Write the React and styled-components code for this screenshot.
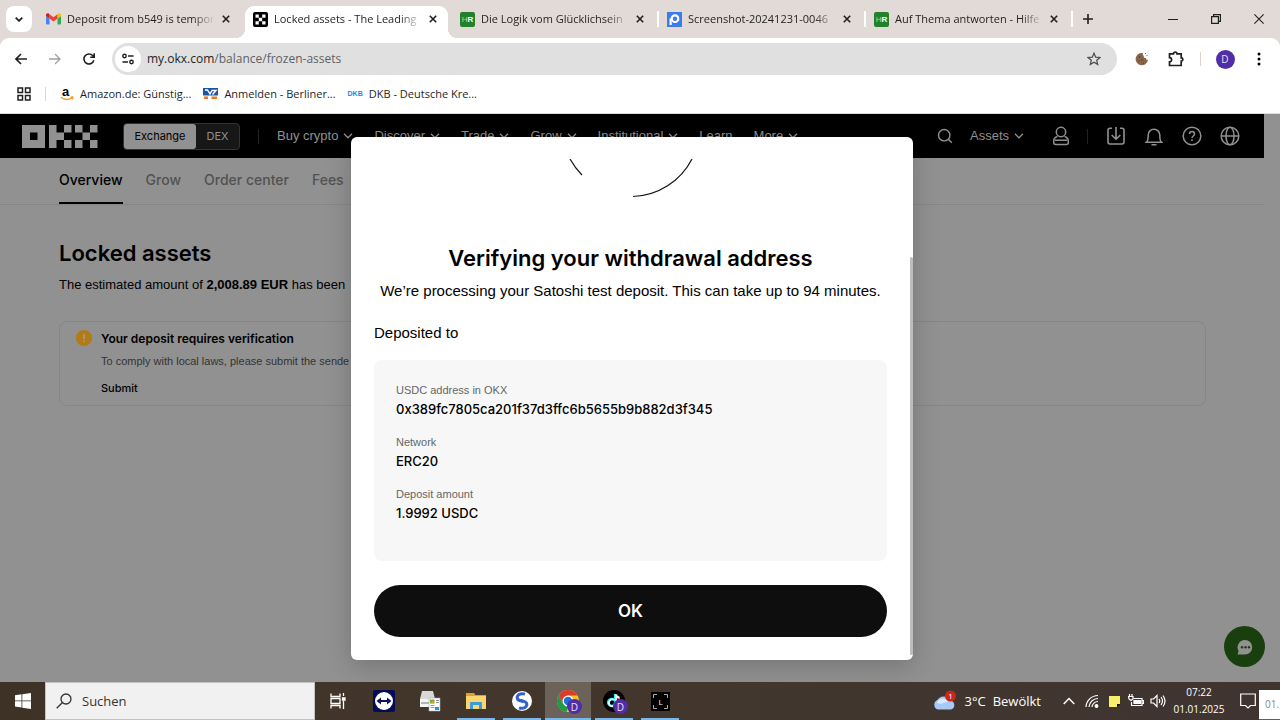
import React from "react";
import styled, { createGlobalStyle } from "styled-components";

const Global = createGlobalStyle`
  *, *::before, *::after { box-sizing: border-box; }
  html, body { margin: 0; height: 100%; overflow: hidden; }
  #root { height: 100%; }
  button, input { font: inherit; color: inherit; border: 0; margin: 0; padding: 0; background: none; }
  a { color: inherit; text-decoration: none; }
  h1, h2, h3, p, dl, dd, dt { margin: 0; font-weight: 400; }
  svg { display: block; flex: none; }
`;

const ui = `"Open Sans", "Noto Sans", sans-serif`;
const site = `"Liberation Sans", Arial, sans-serif`;
const strong = `Inter, "Liberation Sans", sans-serif`;

const Desktop = styled.div`
  height: 100vh;
  display: flex;
  flex-direction: column;
  font-family: ${ui};
  font-size: 11px;
  color: #1f1f1f;
`;

/* ---------- browser window ---------- */
const TabStrip = styled.div`
  height: 38px;
  flex: none;
  display: flex;
  align-items: center;
  padding-left: 6px;
  background: #e2dad7;
`;
const TabSearch = styled.button`
  width: 26px;
  height: 26px;
  flex: none;
  margin-right: 6px;
  border-radius: 8px;
  background: #fff;
  display: grid;
  place-items: center;
`;
const Tab = styled.div`
  position: relative;
  flex: 0 1 207px;
  min-width: 0;
  height: 32px;
  align-self: flex-end;
  display: flex;
  align-items: center;
  padding: 0 11px 6px 8px;
  border-radius: 9px 9px 0 0;
  ${(p) => p.$active && `
    &::before, &::after {
      content: "";
      position: absolute;
      bottom: 0;
      width: 9px;
      height: 9px;
    }
    margin-right: 4px;
    flex-basis: 203px;
    padding-right: 7px;
    background: #fff;
    &::before { left: -9px; background: radial-gradient(circle at 0 0, transparent 9px, #fff 9px); }
    &::after { right: -9px; background: radial-gradient(circle at 100% 0, transparent 9px, #fff 9px); }
  `}
`;
const TabTitle = styled.span`
  flex: 1;
  min-width: 0;
  margin: 0 4px 0 6px;
  line-height: 16px;
  white-space: nowrap;
  overflow: hidden;
  mask-image: linear-gradient(90deg, #000 126px, transparent 148px);
`;
const TabClose = styled.button`
  width: 16px;
  height: 16px;
  flex: none;
  display: grid;
  place-items: center;
`;
const TabRule = styled.span`
  position: absolute;
  right: 0;
  top: 5px;
  width: 2px;
  height: 16px;
  background: #fff;
`;
const NewTab = styled.button`
  width: 30px;
  height: 30px;
  flex: none;
  display: grid;
  place-items: center;
`;
const WindowButtons = styled.div`
  margin-left: auto;
  display: flex;
`;
const WindowButton = styled.button`
  width: 43px;
  height: 38px;
  display: grid;
  place-items: center;
`;
const Toolbar = styled.div`
  background: #e2dad7;
  flex: none;
`;
const ToolbarInner = styled.div`
  height: 42px;
  display: flex;
  align-items: center;
  padding: 0 4px;
  border-radius: 9px 9px 0 0;
  background: #fff;
`;
const ToolButton = styled.button`
  width: 34px;
  height: 34px;
  flex: none;
  display: grid;
  place-items: center;
`;
const Omnibox = styled.form`
  flex: 1;
  height: 32px;
  margin: 0 8px 0 6px;
  padding: 0 6px 0 3px;
  border-radius: 16px;
  background: #e0e0e0;
  display: flex;
  align-items: center;
  gap: 6px;
`;
const SiteInfo = styled.button`
  width: 26px;
  height: 26px;
  border-radius: 50%;
  background: #fff;
  display: grid;
  place-items: center;
`;
const Address = styled.div`
  flex: 1;
  font-size: 12px;
  line-height: 18px;
  color: #5f6164;
  b { font-weight: 400; color: #1f1f1f; }
`;
const ToolRule = styled.span`
  width: 1px;
  height: 14px;
  margin: 0 7px;
  background: #e2d3cd;
`;
const Avatar = styled.span`
  width: ${(p) => p.$size}px;
  height: ${(p) => p.$size}px;
  border-radius: 50%;
  display: grid;
  place-items: center;
  background: #512da8;
  color: #e8e0f6;
  font-size: 10px;
  line-height: 1;
`;
const Bookmarks = styled.nav`
  height: 34px;
  flex: none;
  display: flex;
  align-items: center;
  padding: 0 17px 6px;
  background: #fff;
  border-bottom: 1px solid #dcdcdc;
`;
const BookmarkRule = styled.span`
  width: 1px;
  height: 14px;
  margin: 0 14px;
  background: #e2d3cd;
`;
const Bookmark = styled.a`
  display: flex;
  align-items: center;
  gap: 6px;
  margin-right: 12px;
  line-height: 16px;
  white-space: nowrap;
`;
const DkbMark = styled.span`
  font-family: "Liberation Sans", sans-serif;
  font-size: 7px;
  font-weight: 700;
  color: #148dea;
`;
const HrMark = styled.span`
  width: 15px;
  height: 15px;
  flex: none;
  border-radius: 2px;
  background: #23802b;
  color: #a9d6a4;
  font: 8px/15px "Liberation Sans", sans-serif;
  text-align: center;
  b { color: #fff; }
`;

/* ---------- site, dimmed behind the dialog ---------- */
const Page = styled.main`
  position: relative;
  flex: 1;
  min-height: 0;
  padding-right: 16px;
  background: #919191;
  font-family: ${site};
  color: #000;
`;
const SiteHeader = styled.header`
  height: 44px;
  display: flex;
  align-items: center;
  padding: 0 15px 0 22px;
  background: #000;
  color: #919191;
  font-size: 13px;
  line-height: 18px;
`;
const Switcher = styled.div`
  display: flex;
  height: 27px;
  margin-left: 24px;
  border: 1px solid #333;
  border-radius: 4px;
  background: #171717;
  font-family: ${strong};
  font-size: 11px;
`;
const SwitchOption = styled.button`
  width: ${(p) => (p.$on ? 72 : 43)}px;
  border-radius: 3px;
  background: ${(p) => (p.$on ? "#919191" : "transparent")};
  color: ${(p) => (p.$on ? "#000" : "#919191")};
`;
const HeaderRule = styled.span`
  width: 1px;
  height: 15px;
  background: #222;
  margin: 0 ${(p) => p.$gap}px;
`;
const MainMenu = styled.nav`
  display: flex;
  gap: 21px;
`;
const MenuLink = styled.a`
  display: flex;
  align-items: center;
  gap: 5px;
  white-space: nowrap;
`;
const HeaderTools = styled.div`
  margin-left: auto;
  display: flex;
  align-items: center;
  ${MenuLink} { margin: 0 20px 0 6px; }
`;
const HeaderButton = styled.button`
  width: ${(p) => p.$w || 38}px;
  height: 24px;
  display: grid;
  place-items: center;
`;
const SubNav = styled.nav`
  height: 47px;
  display: flex;
  gap: 23px;
  padding: 0 59px;
  border-bottom: 1px solid #868686;
`;
const SubLink = styled.a`
  height: 46px;
  padding-top: 12px;
  font-family: ${strong};
  font-size: 14px;
  line-height: 20px;
  font-weight: 500;
  white-space: nowrap;
  color: ${(p) => (p.$on ? "#000" : "#525252")};
  border-bottom: 2px solid ${(p) => (p.$on ? "#000" : "transparent")};
`;
const Content = styled.section`
  padding: 34px 58px 0 59px;
`;
const PageTitle = styled.h1`
  font-family: ${strong};
  font-size: 22px;
  line-height: 28px;
  font-weight: 600;
`;
const Summary = styled.p`
  margin-top: 8px;
  font-size: 13px;
  line-height: 20px;
`;
const Notice = styled.article`
  margin-top: 26px;
  height: 85px;
  padding: 8px 16px;
  border: 1px solid #868686;
  border-radius: 8px;
  display: flex;
  gap: 9px;
`;
const NoticeText = styled.div`
  display: flex;
  flex-direction: column;
  align-items: flex-start;
  font-size: 11px;
  line-height: 16px;
  h2 { font-family: ${strong}; font-size: 12px; line-height: 18px; font-weight: 600; }
  p { margin-top: 5px; color: #333; }
  button { margin-top: 11px; font-family: ${strong}; font-weight: 500; }
`;
const ChatButton = styled.button`
  position: absolute;
  right: 15px;
  bottom: 15px;
  width: 41px;
  height: 41px;
  border-radius: 50%;
  background: #193f0e;
  display: grid;
  place-items: center;
`;

/* ---------- dialog ---------- */
const DialogLayer = styled.div`
  position: absolute;
  inset: 0 16px 0 0;
  display: grid;
  place-items: center;
`;
const Dialog = styled.section`
  position: relative;
  width: 562px;
  max-width: 90%;
  margin-top: 1px;
  padding: 22px 26px 23px 23px;
  border-radius: 6px;
  background: #fff;
  box-shadow: 0 6px 26px rgba(0, 0, 0, 0.2);
`;
const ScrollThumb = styled.span`
  position: absolute;
  right: 0;
  top: 120px;
  bottom: 5px;
  width: 3px;
  border-radius: 2px;
  background: #bdbdbd;
`;
const Spinner = styled.div`
  height: 40px;
  display: flex;
  justify-content: center;
`;
const DialogTitle = styled.h2`
  margin-top: 44px;
  font-family: ${strong};
  font-size: 22px;
  line-height: 30px;
  font-weight: 600;
  text-align: center;
  white-space: nowrap;
`;
const DialogText = styled.p`
  margin-top: 7px;
  font-size: 15px;
  line-height: 22px;
  text-align: center;
  white-space: nowrap;
`;
const Heading = styled.h3`
  margin-top: 20px;
  font-size: 15px;
  line-height: 22px;
`;
const Details = styled.dl`
  margin-top: 16px;
  padding: 22px 22px 39px;
  border-radius: 8px;
  background: #f7f7f7;
  display: grid;
  gap: 16px;
`;
const Detail = styled.div`
  dt { font-size: 11px; line-height: 16px; color: #666; }
  dd { margin-top: 2px; font-family: ${strong}; font-size: 13px; line-height: 18px; font-weight: 500; }
`;
const OkButton = styled.button`
  display: block;
  width: 100%;
  height: 52px;
  margin-top: 24px;
  border-radius: 26px;
  background: #0e0e0e;
  color: #fff;
  font-family: ${strong};
  font-size: 17px;
  font-weight: 600;
`;

/* ---------- taskbar ---------- */
const Taskbar = styled.footer`
  position: relative;
  height: 38px;
  flex: none;
  display: flex;
  align-items: stretch;
  background: linear-gradient(90deg, #3e3126, #43362c 40%, #41362f 70%, #3f3430);
  color: #fff;
`;
const StartButton = styled.button`
  width: 45px;
  display: grid;
  place-items: center;
`;
const SearchBox = styled.label`
  width: 270px;
  display: flex;
  align-items: center;
  gap: 10px;
  padding-left: 10px;
  background: #f1f1f1;
  border: 1px solid #c4c2c0;
  color: #333;
  font-size: 13px;
  input { width: 100%; outline: 0; }
  input::placeholder { color: #333; opacity: 1; }
`;
const TaskButton = styled.button`
  position: relative;
  width: 46px;
  display: grid;
  place-items: center;
  background: ${(p) => (p.$active ? "#6b625a" : "transparent")};
  &::after {
    content: "";
    position: absolute;
    bottom: 0;
    left: ${(p) => (p.$active ? 0 : 4)}px;
    right: ${(p) => (p.$active ? 0 : 4)}px;
    height: 2px;
    background: ${(p) => (p.$open ? "#79b8ea" : "transparent")};
  }
`;
const AppBadge = styled.span`
  position: absolute;
  right: 9px;
  bottom: 6px;
`;
const Tray = styled.div`
  margin-left: auto;
  display: flex;
  align-items: center;
`;
const Weather = styled.button`
  display: flex;
  align-items: center;
  gap: 7px;
  font-size: 13px;
  margin-right: 16px;
  white-space: nowrap;
`;
const TrayButton = styled.button`
  width: ${(p) => p.$w || 22}px;
  height: 38px;
  display: grid;
  place-items: center;
`;
const Clock = styled.time`
  width: 60px;
  margin-right: 8px;
  text-align: center;
  font-size: 10px;
  line-height: 17px;
`;
const DateTip = styled.span`
  width: 21px;
  height: 30px;
  align-self: flex-end;
  padding: 6px 0 0 6px;
  background: #fff;
  border-bottom: 1px solid #1b6fc0;
  color: #888;
  font-size: 10px;
  line-height: 16px;
`;

/* ---------- drawings ---------- */
const Stroke = ({ w, h = w, box, sw = 1.5, children, color = "currentColor" }) => (
  <svg width={w} height={h} viewBox={box || `0 0 ${w} ${h}`} fill="none" stroke={color} strokeWidth={sw}>
    {children}
  </svg>
);
const Chevron = () => (
  <Stroke w={10} h={6} sw={1.3}><path d="M1 .8 5 4.8 9 .8" /></Stroke>
);
const CloseX = () => (
  <Stroke w={8} sw={1.6} color="#1f1f1f"><path d="M.8.8l6.4 6.4M7.2.8.8 7.2" /></Stroke>
);
const Gmail = () => (
  <svg width="15" height="12" viewBox="0 0 15 12">
    <path fill="#4285f4" d="M1 11.5h2.5V5.6L0 3v7.5a1 1 0 0 0 1 1z" />
    <path fill="#34a853" d="M11.5 11.5H14a1 1 0 0 0 1-1V3l-3.5 2.6z" />
    <path fill="#fbbc04" d="M11.5 1.2v4.4L15 3V1.9C15 .4 13.3-.4 12.2.6z" />
    <path fill="#ea4335" d="M3.5 5.6V1.2l4 3 4-3v4.400l-4 3z" />
    <path fill="#c5221f" d="M0 1.9V3l3.5 2.6V1.2L2.8.6C1.7-.4 0 .4 0 1.9z" />
  </svg>
);
const OkxIcon = () => (
  <svg width="15" height="15" viewBox="0 0 15 15">
    <rect width="15" height="15" rx="2" />
    <path fill="#fff" d="M2.5 2.5h3.300v3.300H2.500zM9.200 2.500h3.300v3.300H9.200zM5.800 5.800h3.400v3.400H5.800zM2.500 9.200h3.300v3.300H2.500zM9.200 9.200h3.300v3.300H9.200z" />
  </svg>
);
const PictrIcon = () => (
  <svg width="15" height="15" viewBox="0 0 15 15">
    <rect width="15" height="15" fill="#3b7bea" />
    <circle cx="8" cy="6.7" r="3.3" fill="none" stroke="#fff" strokeWidth="2.2" />
    <path d="M3.6 6.5V13" stroke="#fff" strokeWidth="2.2" />
  </svg>
);
const OkxLogo = () => (
  <svg width="77" height="23" viewBox="0 0 77 23" fill="#919191">
    <path fillRule="evenodd" d="M0 0h23v23H0zM8 7.5v7.500h7.500V7.500z" />
    <path d="M27 0h7.500v7.500H42V15h-7.500v8H27zM42 0h7.500v7.500H42zM42 15h7.500v8H42z" />
    <path d="M53 0h7.500v7.500H53zM68 0h7.500v7.500H68zM60.500 7.500H68V15h-7.500zM53 15h7.500v8H53zM68 15h7.500v8H68z" />
  </svg>
);

const tabs = [
  { title: "Deposit from b549 is tempor", icon: <Gmail /> },
  { title: "Locked assets - The Leading", icon: <OkxIcon />, active: true },
  { title: "Die Logik vom Glücklichsein", icon: <HrMark>H<b>R</b></HrMark>, rule: true },
  { title: "Screenshot-20241231-0046", icon: <PictrIcon />, rule: true },
  { title: "Auf Thema antworten - Hilfe", icon: <HrMark>H<b>R</b></HrMark>, rule: true },
];
const menu = ["Buy crypto", "Discover", "Trade", "Grow", "Institutional", "Learn", "More"];
const details = [
  ["USDC address in OKX", "0x389fc7805ca201f37d3ffc6b5655b9b882d3f345"],
  ["Network", "ERC20"],
  ["Deposit amount", "1.9992 USDC"],
];

const Browser = () => (
  <>
    <TabStrip>
      <TabSearch aria-label="Search tabs"><Stroke w={8} h={5} sw={1.7}><path d="M.7.6 4 3.9 7.3.6" /></Stroke></TabSearch>
      {tabs.map((t) => (
        <Tab key={t.title} $active={t.active}>
          {t.icon}
          <TabTitle>{t.title}</TabTitle>
          <TabClose aria-label="Close tab"><CloseX /></TabClose>
          {t.rule && <TabRule />}
        </Tab>
      ))}
      <NewTab aria-label="New tab"><Stroke w={10} sw={1.6}><path d="M5 0v10M0 5h10" /></Stroke></NewTab>
      <WindowButtons>
        <WindowButton aria-label="Minimize"><Stroke w={10} sw={1}><path d="M0 5.5h10" /></Stroke></WindowButton>
        <WindowButton aria-label="Restore"><Stroke w={10} sw={1.2}><path d="M.6 2.600h6.800v6.800H.6zM2.600 2.600v-2h6.800v6.800h-2" /></Stroke></WindowButton>
        <WindowButton aria-label="Close"><Stroke w={10} sw={1.1}><path d="M.4.4l9.200 9.200M9.600.4.4 9.600" /></Stroke></WindowButton>
      </WindowButtons>
    </TabStrip>
    <Toolbar>
      <ToolbarInner>
        <ToolButton aria-label="Back"><Stroke w={12} sw={1.6}><path d="M12 6H1.200M6 1 1 6l5 5" /></Stroke></ToolButton>
        <ToolButton aria-label="Forward"><Stroke w={12} sw={1.3} color="#a0a0a0"><path d="M0 6h10.800M6 1l5 5-5 5" /></Stroke></ToolButton>
        <ToolButton aria-label="Reload"><Stroke w={12} sw={1.6}><path d="M10.800 7.200A5 5 0 1 1 9.600 2.500L11 4M11.200.3v4H7.300" /></Stroke></ToolButton>
        <Omnibox>
          <SiteInfo type="button" aria-label="Site information">
            <Stroke w={12} sw={1.4}><circle cx="2.5" cy="3" r="1.7" /><path d="M6 3h5.500M.5 9H6" /><circle cx="9.5" cy="9" r="1.7" /></Stroke>
          </SiteInfo>
          <Address><b>my.okx.com</b>/balance/frozen-assets</Address>
          <ToolButton type="button" aria-label="Bookmark this page">
            <Stroke w={14} sw={1.2} color="#4a4a4a"><path d="M7 1.200l1.700 4 4.300.3-3.300 2.800 1 4.200L7 10.200l-3.700 2.300 1-4.200L1 5.500l4.300-.3z" /></Stroke>
          </ToolButton>
        </Omnibox>
        <ToolButton aria-label="Cookie extension">
          <svg width="14" height="14" viewBox="0 0 14 14">
            <path fill="#8a6548" d="M8 1a6.200 6.200 0 1 0 5 6.800c-1.500.3-2.200-.6-2-1.800-1.700.2-2.600-.7-2.100-2.100C7.700 3.500 7.400 2 8 1z" />
            <g fill="#4b3120"><circle cx="4.5" cy="5" r=".7" /><circle cx="7" cy="8" r=".7" /><circle cx="4" cy="9" r=".6" /><circle cx="8.5" cy="11" r=".6" /><circle cx="12" cy="3.500" r=".5" /><circle cx="10.500" cy="1.500" r=".5" /></g>
          </svg>
        </ToolButton>
        <ToolButton aria-label="Extensions"><Stroke w={16} sw={1.7}><path d="M1.500 2.800h4C5.500.6 9 .6 9 2.800h4.200v4c2.200 0 2.200 3.200 0 3.200v4.500H1.500v-3.700c2.800-.2 2.800-4 0-4.200z" /></Stroke></ToolButton>
        <ToolRule />
        <ToolButton aria-label="Profile"><Avatar $size={19}>D</Avatar></ToolButton>
        <ToolButton aria-label="Menu">
          <svg width="4" height="14" viewBox="0 0 4 14"><circle cx="2" cy="2" r="1.500" /><circle cx="2" cy="7" r="1.500" /><circle cx="2" cy="12" r="1.500" /></svg>
        </ToolButton>
      </ToolbarInner>
    </Toolbar>
    <Bookmarks>
      <Stroke w={14} sw={1.5}><path d="M1 1h4.500v4.500H1zM8.500 1H13v4.500H8.500zM1 8.500h4.500V13H1zM8.500 8.500H13V13H8.500z" /></Stroke>
      <BookmarkRule />
      <Bookmark href="#amazon">
        <svg width="14" height="14" viewBox="0 0 14 14">
          <text x="2" y="9" fontFamily="Liberation Sans, sans-serif" fontSize="13" fontWeight="700">a</text>
          <path d="M.8 10.200c3.500 2.800 7.500 2.800 11 .8M10.500 10.200l2.300-.2-.6 2.400" fill="none" stroke="#f7981d" strokeWidth="1.4" />
        </svg>
        Amazon.de: Günstig...
      </Bookmark>
      <Bookmark href="#volksbank">
        <svg width="15" height="11" viewBox="0 0 15 11">
          <path fill="#1a56a5" d="M0 0h15v7.500H0z" /><path fill="#ef7622" d="M1 8.500h4V11H1zM8.500 8.500H14V11H8.500z" />
          <path d="M2 2h2.500L7 6l2-3.500h4L9.500 6.500" fill="none" stroke="#fff" strokeWidth="1.400" />
        </svg>
        Anmelden - Berliner...
      </Bookmark>
      <Bookmark href="#dkb"><DkbMark>DKB</DkbMark>DKB - Deutsche Kre...</Bookmark>
    </Bookmarks>
  </>
);

const Site = () => (
  <Page>
    <SiteHeader>
      <OkxLogo />
      <Switcher>
        <SwitchOption $on>Exchange</SwitchOption>
        <SwitchOption>DEX</SwitchOption>
      </Switcher>
      <HeaderRule $gap={18} />
      <MainMenu>
        {menu.map((m) => (
          <MenuLink key={m} href="#menu">{m}{m !== "Learn" && <Chevron />}</MenuLink>
        ))}
      </MainMenu>
      <HeaderTools>
        <HeaderButton aria-label="Search"><Stroke w={16} sw={1.4}><circle cx="7.2" cy="7.2" r="5.7" /><path d="M11.300 11.300 14.800 14.800" /></Stroke></HeaderButton>
        <MenuLink href="#assets">Assets<Chevron /></MenuLink>
        <HeaderButton $w={34} aria-label="Account">
          <Stroke w={18} h={20} sw={1.5}><circle cx="9" cy="6" r="4.7" /><path d="M5.500 10.500C3 11 1.700 13 1.700 15.500v1q0 2 2 2h10.600q2 0 2-2v-1c0-2.500-1.300-4.500-3.800-5M3 14.300h12" /></Stroke>
        </HeaderButton>
        <HeaderButton $w={19} as="span"><HeaderRule $gap={0} /></HeaderButton>
        <HeaderButton aria-label="Deposit"><Stroke w={18} sw={1.6}><path d="M5 1.200H3q-2 0-2 2V15q0 2 2 2h12q2 0 2-2V3.200q0-2-2-2h-2M9 0v12M4.700 8 9 12.200 13.300 8" /></Stroke></HeaderButton>
        <HeaderButton aria-label="Notifications"><Stroke w={18} h={19} sw={1.5}><path d="M1.500 15.200c1.500-1 1.700-3 1.700-7.200a5.800 5.800 0 0 1 11.600 0c0 4.200.2 6.200 1.700 7.200zM6.500 17.800h5" /></Stroke></HeaderButton>
        <HeaderButton aria-label="Help"><Stroke w={20} sw={1.5}><circle cx="10" cy="10" r="8.800" /><path d="M7.500 8c0-3.300 5-3.300 5 0 0 2-2.500 2-2.500 4M10 13.300v1.700" /></Stroke></HeaderButton>
        <HeaderButton aria-label="Language"><Stroke w={20} sw={1.5}><circle cx="10" cy="10" r="8.800" /><ellipse cx="10" cy="10" rx="4" ry="8.800" /><path d="M1.200 10h17.600" /></Stroke></HeaderButton>
      </HeaderTools>
    </SiteHeader>
    <SubNav>
      <SubLink href="#overview" $on>Overview</SubLink>
      <SubLink href="#grow">Grow</SubLink>
      <SubLink href="#orders">Order center</SubLink>
      <SubLink href="#fees">Fees</SubLink>
    </SubNav>
    <Content>
      <PageTitle>Locked assets</PageTitle>
      <Summary>The estimated amount of <b>2,008.89 EUR</b> has been</Summary>
      <Notice>
        <svg width="16" height="16" viewBox="0 0 16 16"><circle cx="8" cy="8" r="8" fill="#b27b17" /><path d="M8 4v5M8 10.500V12" stroke="#a9a08c" strokeWidth="1.500" /></svg>
        <NoticeText>
          <h2>Your deposit requires verification</h2>
          <p>To comply with local laws, please submit the sende</p>
          <button>Submit</button>
        </NoticeText>
      </Notice>
    </Content>
    <ChatButton aria-label="Chat">
      <svg width="18" height="18" viewBox="0 0 18 18">
        <path fill="#919191" d="M9 2a7 7 0 1 1 0 14.500H1.500L2.600 13A7.300 7.300 0 0 1 9 2z" />
        <g fill="#193f0e"><circle cx="6" cy="9.300" r="1.200" /><circle cx="9.500" cy="9.300" r="1.200" /><circle cx="13" cy="9.300" r="1.200" /></g>
      </svg>
    </ChatButton>
    <DialogLayer>
      <Dialog role="dialog" aria-labelledby="dialog-title">
        <Spinner><Stroke w={138} h={40} sw={1.2} color="#111"><path d="M8 0Q13 9 20 16M71 37.500A69 69 0 0 0 130 0" /></Stroke></Spinner>
        <DialogTitle id="dialog-title">Verifying your withdrawal address</DialogTitle>
        <DialogText>We’re processing your Satoshi test deposit. This can take up to 94 minutes.</DialogText>
        <Heading>Deposited to</Heading>
        <Details>
          {details.map(([k, v]) => (
            <Detail key={k}><dt>{k}</dt><dd>{v}</dd></Detail>
          ))}
        </Details>
        <OkButton>OK</OkButton>
        <ScrollThumb />
      </Dialog>
    </DialogLayer>
  </Page>
);

const WindowsTaskbar = () => (
  <Taskbar>
    <StartButton aria-label="Start">
      <svg width="16" height="16" viewBox="0 0 16 16" fill="#fff"><path d="M0 2.200 6.500 1.300v6.200H0zM7.300 1.200 16 0v7.500H7.300zM0 8.300h6.500v6.200L0 13.600zM7.300 8.300H16V16l-8.700-1.300z" /></svg>
    </StartButton>
    <SearchBox>
      <Stroke w={16} sw={1.3}><circle cx="10" cy="6" r="5" /><path d="M6.500 9.500.7 15.300" /></Stroke>
      <input type="text" aria-label="Suchen" placeholder="Suchen" />
    </SearchBox>
    <TaskButton aria-label="Task view">
      <Stroke w={16} sw={1.3}><path d="M1 .5v3h9v-3M1 15.500v-3h9v3M1 5.500h9v5H1zM13.500 0v3M13.500 8v8" /><path d="M12.500 5h2.500v2h-2.500z" fill="#fff" /></Stroke>
    </TaskButton>
    <TaskButton aria-label="TeamViewer">
      <svg width="22" height="22" viewBox="0 0 22 22"><rect width="22" height="22" rx="2" fill="#040c54" /><circle cx="11" cy="11" r="9" fill="#fff" /><path fill="#0a145c" d="M3.500 11 8 7.500V10h6V7.500l4.500 3.500-4.500 3.500V12H8v2.500z" /></svg>
    </TaskButton>
    <TaskButton aria-label="Scanner">
      <svg width="22" height="22" viewBox="0 0 22 22"><path fill="#d8d8d8" d="M3 1h11l2 8H1z" /><path fill="#f4f4f4" d="M1 9h15v8H1z" /><path stroke="#777" d="M2 13h9" /><path fill="#fff" stroke="#aaa" strokeWidth=".6" d="M10 8h11v13H10z" /><path fill="#7faa32" d="M11 9.500h4.500v4H11z" /><path fill="#eaa02a" d="M12.500 11h2v2.500h-2z" /><path stroke="#999" d="M17 10.500h3M17 12.500h3M11.500 15.500h4M11.500 17.500h4" /><path fill="#2196e8" d="M16 17h4v3h-4z" /></svg>
    </TaskButton>
    <TaskButton $open aria-label="Explorer">
      <svg width="20" height="18" viewBox="0 0 20 18"><path fill="#dfa02c" d="M0 1h8l1.500 2H20v4H0z" /><path fill="#fad66e" d="M0 4h20v13H0z" /><path fill="#3e9ade" d="M4 17v-6q0-1 1-1h10q1 0 1 1v6h-3v-4H7v4z" /></svg>
    </TaskButton>
    <TaskButton $open aria-label="Simplenote">
      <svg width="20" height="20" viewBox="0 0 20 20"><circle cx="10" cy="10" r="10" fill="#fff" /><path d="M13 3.200C8 1.500 4.500 4.500 5.300 7.500 6 10 10 9.800 12 11" fill="none" stroke="#3361cc" strokeWidth="3" /><path d="M7 16.800c5 1.700 8.500-1.300 7.700-4.300C14 10 10 10.200 8 9" fill="none" stroke="#3361cc" strokeWidth="3" /></svg>
    </TaskButton>
    <TaskButton $active $open aria-label="Chrome">
      <svg width="22" height="22" viewBox="0 0 22 22"><circle cx="11" cy="11" r="11" fill="#fbc116" /><path fill="#dc3a2c" d="M1.500 5.500A11 11 0 0 1 20.500 5.500H11L6.200 13.700z" /><path fill="#1f9b4b" d="M1.500 5.500l4.700 8.200L11 16.500 9.500 22A11 11 0 0 1 1.500 5.500z" /><circle cx="11" cy="11" r="5.500" fill="#fff" /><circle cx="11" cy="11" r="4.200" fill="#1b70e0" /></svg>
      <AppBadge><Avatar $size={15}>D</Avatar></AppBadge>
    </TaskButton>
    <TaskButton $open aria-label="TikTok">
      <svg width="22" height="22" viewBox="0 0 22 22" fill="none" strokeWidth="2.2"><circle cx="11" cy="11" r="11" fill="#000" /><path stroke="#25f4ee" d="M10.500 9.500a3.500 3.500 0 1 0 1.500 3V4" /><path stroke="#fe2c55" d="M13 5c.5 2 2 3.500 4 3.500" /><path stroke="#fff" d="M11.500 10a3.500 3.500 0 1 0 1.500 3V4.500c.5 2 2 3 3.500 3" strokeWidth="1.8" /></svg>
      <AppBadge><Avatar $size={15}>D</Avatar></AppBadge>
    </TaskButton>
    <TaskButton $open aria-label="L">
      <svg width="19" height="19" viewBox="0 0 19 19"><rect width="19" height="19" fill="#000" /><path d="M2.500 6V2.500H6M13 2.500h3.500V6M16.500 13v3.500H13M6 16.500H2.500V13" stroke="#aaa" fill="none" /><text x="9.500" y="12.500" textAnchor="middle" fontSize="8" fill="#fff">L</text></svg>
    </TaskButton>
    <Tray>
      <Weather>
        <svg width="24" height="22" viewBox="0 0 24 22"><path fill="#a9c8f5" d="M5 19.500a5 5 0 0 1-.5-9.500 7 7 0 0 1 12.500.5 4.600 4.600 0 0 1 1 9z" /><path fill="#dbe9fd" d="M4 13a6 6 0 0 1 11-1c-4 0-6 3-11 1z" /><circle cx="17.500" cy="6" r="5.500" fill="#c9271c" /><text x="17.500" y="9" fontSize="8" textAnchor="middle" fill="#fff">1</text></svg>
        <span>3°C</span>
        <span>Bewölkt</span>
      </Weather>
      <TrayButton $w={24} aria-label="Hidden icons"><Stroke w={12} h={8}><path d="M.7 7 6 1.500 11.300 7" /></Stroke></TrayButton>
      <TrayButton aria-label="Network"><Stroke w={14} sw={1.2}><path d="M1 13A12 12 0 0 1 13 1.500M4 13a9 9 0 0 1 9-8.500M7 13a6 6 0 0 1 6-5.500" /><circle cx="11.500" cy="12" r="1.300" fill="#fff" /></Stroke></TrayButton>
      <TrayButton aria-label="Notes"><svg width="13" height="13" viewBox="0 0 13 13"><path fill="#f8f06a" stroke="#111" strokeWidth=".7" d="M.5.500h12V9L9 12.500H.5z" /><path d="M9 12.500V9h3.500" fill="#111" /></svg></TrayButton>
      <TrayButton aria-label="Battery"><Stroke w={16} h={14} sw={1.2}><path d="M5.500 4.500H14v7H3.500V8M14.500 6.500h1v3h-1" /><path d="M6 6.500h6.500v3H6z" fill="#fff" /><path d="M1.500 0v2.500M4 0v2.500M.5 2.500H5V5L3 6.500 1 5z" /></Stroke></TrayButton>
      <TrayButton aria-label="Volume"><Stroke w={16} h={14} sw={1.2}><path d="M1 5h2.500L7 1.500v11L3.500 9H1zM9 5q1.500 2 0 4M11 3q3 4 0 8M13 1.500q4 5.500 0 11" /></Stroke></TrayButton>
      <Clock>07:22<br />01.01.2025</Clock>
      <TrayButton aria-label="Notifications"><Stroke w={16} sw={1.2}><path d="M.7 1h14.600v11.500h-4.800L8 15l-2.500-2.500H.7z" /></Stroke></TrayButton>
      <DateTip>01.</DateTip>
    </Tray>
  </Taskbar>
);

export default function App() {
  return (
    <Desktop>
      <Global />
      <Browser />
      <Site />
      <WindowsTaskbar />
    </Desktop>
  );
}
